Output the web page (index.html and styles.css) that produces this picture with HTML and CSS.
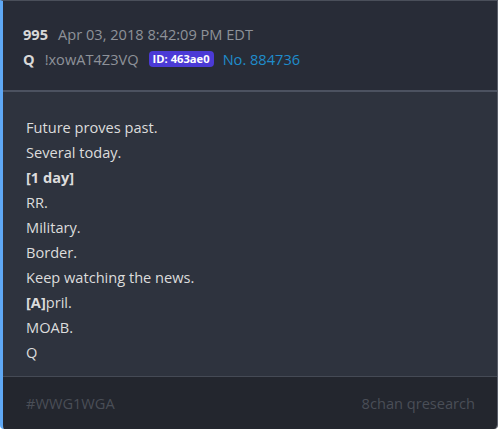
FILE: index.html
```html
<!DOCTYPE html>
<html>
<head>
<meta charset="utf-8">
<link rel="stylesheet" href="styles.css">
</head>
<body>
<div class="card">
  <div class="header">
    <div class="row"><span class="num">995</span><span class="date">Apr 03, 2018 8:42:09 PM EDT</span></div>
    <div class="row"><span class="num">Q</span><span class="trip">!xowAT4Z3VQ</span><span class="badge">ID: 463ae0</span><span class="no">No. 884736</span></div>
  </div>
  <div class="body">
    <p>Future proves past.</p>
    <p>Several today.</p>
    <p><b>[1 day]</b></p>
    <p>RR.</p>
    <p>Military.</p>
    <p>Border.</p>
    <p>Keep watching the news.</p>
    <p><b>[A]</b>pril.</p>
    <p>MOAB.</p>
    <p>Q</p>
  </div>
  <div class="footer">
    <span>#WWG1WGA</span>
    <span>8chan qresearch</span>
  </div>
</div>
</body>
</html>
```
FILE: styles.css
```css
html, body { margin: 0; padding: 0; background: #ffffff; }
body { font-family: "Open Sans", "Liberation Sans", sans-serif; font-size: 14.6px; }
.card {
  width: 498px;
  height: 429px;
  box-sizing: border-box;
  border-left: 3px solid #5fa8f5;
  border-right: 1px solid #5a5f6a;
  border-top: 1px solid #4a4f5a;
  border-radius: 0 0 4px 4px;
  display: flex;
  flex-direction: column;
  overflow: hidden;
}
.header {
  background: #282c37;
  height: 91px;
  box-sizing: border-box;
  padding: 22px 20px 0 20px;
  border-bottom: 2px solid #4c5260;
  display: flex;
  flex-direction: column;
  gap: 4px;
}
.row { display: flex; align-items: center; height: 21px; }
.num { color: #d8d8d8; font-weight: 700; margin-right: 10px; }
.date { color: #8e9299; }
.trip { color: #8e9299; margin-right: 10px; }
.badge {
  background: #4b3ad6;
  color: #ffffff;
  font-weight: 700;
  font-size: 11.2px;
  padding: 0 4px;
  border-radius: 4px;
  margin-right: 9px;
  line-height: 16px;
}
.no { color: #1f8ccc; }
.body {
  background: #2e333e;
  flex: 1;
  padding: 23px 23px 0 23px;
  border-bottom: 1px solid #454a55;
}
.body p { margin: 0; color: #dcdcdc; line-height: 25px; }
.body b { font-weight: 700; }
.footer {
  background: #23262e;
  height: 52px;
  box-sizing: border-box;
  padding: 0 22px 0 23px;
  display: flex;
  align-items: center;
  justify-content: space-between;
  color: #4a4e57;
}
```
